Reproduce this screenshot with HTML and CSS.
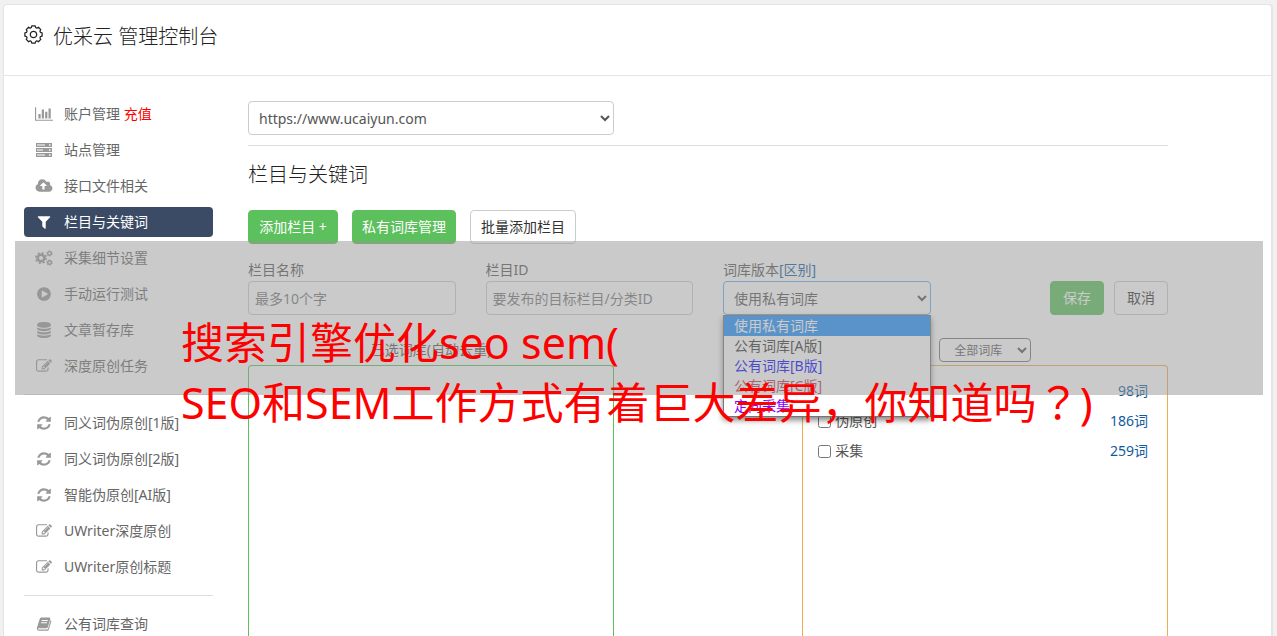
FILE: index.html
```
<!DOCTYPE html>
<html lang="zh-CN">
<head>
<meta charset="utf-8">
<title>优采云 管理控制台</title>
<link rel="stylesheet" href="styles.css">
</head>
<body>
<svg class="sprite" aria-hidden="true">
  <symbol id="i-chart" viewBox="0 0 2048 1792"><path d="M640 896v512h-256v-512h256zm384-512v1024h-256v-1024h256zm1024 1152v128h-2048v-1536h128v1408h1920zm-640-896v768h-256v-768h256zm384-384v1152h-256v-1152h256z"/></symbol>
  <symbol id="i-server" viewBox="0 0 16 14"><path fill-rule="evenodd" d="M0 0h16v4H0zM1 1.500v1h8v-1zM13 1.300v1.400h1.500V1.300zM0 5h16v4H0zM1 6.500v1h6v-1zM13 6.300v1.400h1.500V6.300zM0 10h16v4H0zM1 11.500v1h8v-1zM13 11.300v1.400h1.500v-1.400z"/></symbol>
  <symbol id="i-cloud" viewBox="0 0 2048 1792"><path fill-rule="evenodd" d="M1344 864q0-14-9-23l-352-352q-9-9-23-9t-23 9l-351 351q-10 12-10 24 0 14 9 23t23 9h224v352q0 13 9.500 22.500t22.500 9.500h192q13 0 22.500-9.500t9.500-22.500v-352h224q13 0 22.500-9.500t9.500-22.500zm640 288q0 159-112.500 271.500t-271.500 112.500h-1088q-185 0-316.500-131.500t-131.500-316.500q0-130 70-240t188-165q-2-30-2-43 0-212 150-362t362-150q156 0 285.500 87t188.500 231q71-62 166-62 106 0 181 75t75 181q0 76-41 138 130 31 213.500 135.500t83.500 238.500z"/></symbol>
  <symbol id="i-filter" viewBox="0 0 1792 1792"><path d="M1595 295q17 41-14 70l-493 493v742q0 42-39 59-13 5-25 5-27 0-45-19l-256-256q-19-19-19-45v-486l-493-493q-31-29-14-70 17-39 59-39h1280q42 0 59 39z"/></symbol>
  <symbol id="i-cogs" viewBox="0 0 18 16"><g fill="none" stroke="currentColor"><circle cx="6" cy="8" r="3.300" stroke-width="2.600"/><circle cx="6" cy="8" r="5.100" stroke-width="1.800" stroke-dasharray="2 2.005"/><circle cx="14.500" cy="3.400" r="1.800" stroke-width="1.400"/><circle cx="14.500" cy="3.400" r="2.700" stroke-width="1" stroke-dasharray="1.400 1.427"/><circle cx="14.500" cy="12.600" r="1.800" stroke-width="1.400"/><circle cx="14.500" cy="12.600" r="2.700" stroke-width="1" stroke-dasharray="1.400 1.427"/></g></symbol>
  <symbol id="i-play" viewBox="0 0 1792 1792"><path fill-rule="evenodd" d="M896 128q209 0 385.500 103t279.500 279.500 103 385.500-103 385.500-279.500 279.500-385.500 103-385.500-103-279.500-279.500-103-385.500 103-385.500 279.500-279.500 385.500-103zm384 823q32-18 32-55t-32-55l-544-320q-31-19-64-1-32 19-32 56v640q0 37 32 56 16 8 32 8 17 0 32-9z"/></symbol>
  <symbol id="i-database" viewBox="0 0 1792 1792"><path d="M896 768q237 0 443-43t325-127v170q0 69-103 128t-280 93.500-385 34.500-385-34.500-280-93.500-103-128v-170q119 84 325 127t443 43zm0 768q237 0 443-43t325-127v170q0 69-103 128t-280 93.500-385 34.500-385-34.500-280-93.500-103-128v-170q119 84 325 127t443 43zm0-384q237 0 443-43t325-127v170q0 69-103 128t-280 93.500-385 34.500-385-34.500-280-93.500-103-128v-170q119 84 325 127t443 43zm0-1152q208 0 385 34.500t280 93.500 103 128v128q0 69-103 128t-280 93.500-385 34.500-385-34.500-280-93.500-103-128v-128q0-69 103-128t280-93.500 385-34.500z"/></symbol>
  <symbol id="i-edit" viewBox="0 0 1792 1792"><path fill-rule="evenodd" d="M888 1184l116-116-152-152-116 116v56h96v96h56zm440-720q-16-16-33 1l-350 350q-17 17-1 33t33-1l350-350q17-17 1-33zm80 594v190q0 119-84.500 203.500t-203.500 84.500h-832q-119 0-203.500-84.500t-84.500-203.500v-832q0-119 84.500-203.500t203.500-84.500h832q63 0 117 25 15 7 18 23 3 17-9 29l-49 49q-14 14-32 8-23-6-45-6h-832q-66 0-113 47t-47 113v832q0 66 47 113t113 47h832q66 0 113-47t47-113v-126q0-13 9-22l64-64q15-15 35-7t20 29zm-96-738l288 288-672 672h-288v-288zm444 132l-92 92-288-288 92-92q28-28 68-28t68 28l152 152q28 28 28 68t-28 68z"/></symbol>
  <symbol id="i-refresh" viewBox="0 0 1792 1792"><path d="M1639 1056q0 5-1 7-64 268-268 434.500t-478 166.500q-146 0-282.500-55t-243.500-157l-129 129q-19 19-45 19t-45-19-19-45v-448q0-26 19-45t45-19h448q26 0 45 19t19 45-19 45l-137 137q71 66 161 102t187 36q134 0 250-65t186-179q11-17 53-117 8-23 30-23h192q13 0 22.500 9.500t9.500 22.500zm25-800v448q0 26-19 45t-45 19h-448q-26 0-45-19t-19-45 19-45l138-138q-148-137-349-137-134 0-250 65t-186 179q-11 17-53 117-8 23-30 23h-199q-13 0-22.500-9.500t-9.500-22.500v-7q65-268 270-434.500t480-166.500q146 0 284 55.500t245 156.500l130-129q19-19 45-19t45 19 19 45z"/></symbol>
  <symbol id="i-book" viewBox="0 0 16 16"><path fill-rule="evenodd" d="M5.200 1.500h8.200q1.200.2.900 1.500l-2.400 8q-.4 1.200-1.600 1.200H2.600q-.7 0-.6.700.2.600 1 .6h7.900q.8 0 1.100-.8L14.600 4q1 .5.700 1.500l-2.500 8q-.4 1.200-1.600 1.200H2.700Q.9 14.500.8 12.600q0-.6.300-1.300l2.500-8.100Q4 1.700 5.200 1.500zM5.900 4l-.3 1h6l.3-1zM5.200 6.300l-.3 1h6l.3-1z"/></symbol>
</svg>

<div class="card">
  <header class="card-head">
    <svg class="head-icon" viewBox="-9 -9 18 18" aria-hidden="true"><g fill="none" stroke="currentColor" stroke-width="1.200" stroke-linejoin="round"><path d="M8.150-1.580V1.580Q4.900 2.030 6.880 4.640L4.640 6.880Q2.030 4.900 1.580 8.150H-1.580Q-2.030 4.900-4.640 6.880L-6.880 4.640Q-4.900 2.030-8.150 1.580V-1.580Q-4.900-2.030-6.880-4.640L-4.640-6.880Q-2.030-4.900-1.580-8.150H1.580Q2.030-4.900 4.640-6.880L6.880-4.640Q4.900-2.030 8.150-1.580z"/><circle r="3"/></g></svg>
    <h1 class="head-title">优采云 管理控制台</h1>
  </header>

  <div class="layout">
    <nav class="side">
      <div class="side-group">
        <a class="side-item" href="#"><svg class="icon wide"><use href="#i-chart"/></svg><span>账户管理 <em class="hot">充值</em></span></a>
        <a class="side-item" href="#"><svg class="icon"><use href="#i-server"/></svg><span>站点管理</span></a>
        <a class="side-item" href="#"><svg class="icon wide"><use href="#i-cloud"/></svg><span>接口文件相关</span></a>
        <a class="side-item active" href="#"><svg class="icon"><use href="#i-filter"/></svg><span>栏目与关键词</span></a>
        <a class="side-item" href="#"><svg class="icon wide"><use href="#i-cogs"/></svg><span>采集细节设置</span></a>
        <a class="side-item" href="#"><svg class="icon"><use href="#i-play"/></svg><span>手动运行测试</span></a>
        <a class="side-item" href="#"><svg class="icon"><use href="#i-database"/></svg><span>文章暂存库</span></a>
        <a class="side-item" href="#"><svg class="icon"><use href="#i-edit"/></svg><span>深度原创任务</span></a>
      </div>
      <div class="side-group">
        <a class="side-item" href="#"><svg class="icon"><use href="#i-refresh"/></svg><span>同义词伪原创[1版]</span></a>
        <a class="side-item" href="#"><svg class="icon"><use href="#i-refresh"/></svg><span>同义词伪原创[2版]</span></a>
        <a class="side-item" href="#"><svg class="icon"><use href="#i-refresh"/></svg><span>智能伪原创[AI版]</span></a>
        <a class="side-item" href="#"><svg class="icon"><use href="#i-edit"/></svg><span>UWriter深度原创</span></a>
        <a class="side-item" href="#"><svg class="icon"><use href="#i-edit"/></svg><span>UWriter原创标题</span></a>
      </div>
      <div class="side-group">
        <a class="side-item" href="#"><svg class="icon"><use href="#i-book"/></svg><span>公有词库查询</span></a>
      </div>
    </nav>

    <main class="main">
      <div class="site-row">
        <select class="control site-select" aria-label="站点"><option>https://www.ucaiyun.com</option></select>
      </div>
      <h2 class="title">栏目与关键词</h2>
      <div class="actions">
        <button class="btn btn-green" type="button">添加栏目 +</button>
        <button class="btn btn-green" type="button">私有词库管理</button>
        <button class="btn btn-plain" type="button">批量添加栏目</button>
      </div>

      <form class="fields">
        <div class="field">
          <label for="name">栏目名称</label>
          <input class="control" id="name" type="text" placeholder="最多10个字">
        </div>
        <div class="field">
          <label for="cid">栏目ID</label>
          <input class="control" id="cid" type="text" placeholder="要发布的目标栏目/分类ID">
        </div>
        <div class="field">
          <div class="label-line"><label for="version">词库版本</label><a href="#">[区别]</a></div>
          <select class="control focused" id="version"><option>使用私有词库</option></select>
          <ul class="menu">
            <li class="selected">使用私有词库</li>
            <li>公有词库[A版]</li>
            <li class="blue">公有词库[B版]</li>
            <li class="red">公有词库[C版]</li>
            <li class="violet">定向采集</li>
          </ul>
        </div>
        <div class="form-buttons">
          <button class="btn btn-green btn-small" type="button">保存</button>
          <button class="btn btn-plain btn-small" type="button">取消</button>
        </div>
      </form>

      <div class="panels">
        <section class="panel-col">
          <div class="panel-head">已选词库(自动去重)</div>
          <div class="panel green"></div>
        </section>
        <section class="panel-col right">
          <div class="panel-head end">
            <select class="filter" aria-label="词库筛选"><option>全部词库</option></select>
          </div>
          <div class="panel orange">
            <div class="row"><input class="tick" type="checkbox" aria-label="词库"><a class="count" href="#">98词</a></div>
            <div class="row"><label class="pick"><input class="tick" type="checkbox">伪原创</label><a class="count" href="#">186词</a></div>
            <div class="row"><label class="pick"><input class="tick" type="checkbox">采集</label><a class="count" href="#">259词</a></div>
          </div>
        </section>
      </div>
    </main>
  </div>
</div>

<div class="banner"><p class="banner-text">搜索引擎优化seo sem(<br>SEO和SEM工作方式有着巨大差异，你知道吗<span class="mark" lang="zh-TW">？</span>)</p></div>
</body>
</html>
```
FILE: styles.css
```
* { box-sizing: border-box; }

body {
  margin: 0;
  height: 100vh;
  padding: 4px 5px 0 3px;
  overflow: hidden;
  position: relative;
  background: #f1f1f1;
  color: #555;
  font: 14px/20px "Noto Sans", "Noto Sans CJK SC", sans-serif;
}

a { color: #0f5b9e; text-decoration: none; }
button, input, select { font: inherit; color: inherit; }

.sprite { position: absolute; width: 0; height: 0; }

.card {
  height: 100%;
  display: flex;
  flex-direction: column;
  background: #fff;
  border: 1px solid #e5e5e5;
  border-bottom: 0;
  border-radius: 4px 4px 0 0;
  box-shadow: 1px 0 0 #e5e5e5;
}

.card-head {
  display: flex;
  align-items: flex-start;
  gap: 10px;
  height: 71px;
  padding: 16px 20px 0;
  border-bottom: 1px solid #e5e5e5;
  color: #222;
}
.head-icon { width: 19px; height: 19px; margin-top: 4px; }
.head-title { margin: 0; font-size: 20px; line-height: 32px; font-weight: 300; }

.layout {
  flex: 1;
  min-height: 0;
  display: flex;
  gap: 35px;
  width: 100%;
  max-width: 1184px;
  padding: 23px 20px 0;
}

.side { flex: 0 0 189px; }
.side-group { display: flex; flex-direction: column; gap: 6px; }
.side-group + .side-group { margin-top: 13px; padding-top: 13px; border-top: 1px solid #ddd; }
.side-item {
  display: grid;
  grid-template-columns: 20px 1fr;
  column-gap: 10px;
  align-items: center;
  height: 30px;
  padding-left: 10px;
  border-radius: 4px;
  color: #666;
}
.side-item.active { background: #3b4b66; color: #fff; }
.icon { width: 16px; height: 16px; color: #999; fill: currentColor; justify-self: center; }
.icon.wide { width: 18px; }
.active .icon { color: #fff; }
.hot { color: #f00; font-style: normal; }

.main { flex: 1; min-width: 0; display: flex; flex-direction: column; padding-top: 2px; }

.control {
  display: block;
  width: 100%;
  height: 34px;
  padding: 6px;
  border: 1px solid #ccc;
  border-radius: 4px;
  background: #fff;
  outline: 0;
}
.control::placeholder { color: #777; }
.focused { border-color: #66afe9; }

.site-row {
  display: grid;
  grid-template-columns: repeat(12, 1fr);
  column-gap: 30px;
  padding-bottom: 10px;
  border-bottom: 1px solid #ddd;
}
.site-select { grid-column: span 5; }

.title { margin: 14px 0 20px; font-size: 20px; line-height: 30px; font-weight: 300; color: #222; }

.actions { display: flex; gap: 14px; }
.btn {
  min-width: 90px;
  height: 34px;
  padding: 0 10px;
  border: 1px solid #ccc;
  border-radius: 4px;
  white-space: nowrap;
}
.btn-green { padding: 0 9px; background: #5cc05c; border-color: #5cc05c; color: #fff; }
.btn-plain { background: #fff; color: #333; }
.btn-small { min-width: 54px; padding: 0; }

.fields { display: grid; grid-template-columns: repeat(4, 1fr); gap: 30px; margin-top: 16px; }
.field { position: relative; }
.field > label, .label-line { display: block; margin-bottom: 1px; }
.form-buttons { display: flex; gap: 10px; align-items: flex-end; justify-content: flex-end; }

.menu {
  position: absolute;
  z-index: 2;
  top: 100%;
  left: 0;
  right: 0;
  margin: 0;
  padding: 0;
  list-style: none;
  background: #fff;
  border: 1px solid #767676;
  box-shadow: 0 3px 6px rgba(0, 0, 0, 0.5);
  color: #333;
}
.menu li { padding-left: 10px; }
.menu .selected { background: #1e90ff; color: #fff; }
.menu .blue { color: #00f; }
.menu .red { color: #c03050; }
.menu .violet { color: #80f; }

.panels {
  flex: 1;
  min-height: 0;
  display: grid;
  grid-template-columns: repeat(12, 1fr);
  column-gap: 30px;
  margin-top: 20px;
}
.panel-col { grid-column: span 5; display: flex; flex-direction: column; }
.panel-col.right { grid-column: 8 / span 5; }
.panel-head { height: 30px; padding-top: 5px; text-align: center; }
.panel-head.end { display: flex; padding: 3px 0 0 137px; }
.filter {
  width: 92px;
  height: 24px;
  padding: 0 10px;
  border: 1px solid #767676;
  border-radius: 4px;
  background: #fff;
  font-size: 12px;
}
.panel { flex: 1; border: 1px solid; border-bottom: 0; border-radius: 4px 4px 0 0; }
.panel.green { border-color: #5cc05c; }
.panel.orange { padding: 10px 19px 0 15px; border-color: #f0ad4e; }
.row { display: flex; align-items: center; justify-content: space-between; height: 30px; }
.pick { display: flex; align-items: center; gap: 4px; }
.tick { width: 13px; height: 13px; margin: 0; }

/* Translucent title strip lying over the page */
.banner {
  position: absolute;
  z-index: 5;
  top: 241px;
  left: 15px;
  right: 14px;
  height: 154px;
  padding: 72px 0 0 166px;
  background: rgba(150, 150, 150, 0.5);
  pointer-events: none;
}
.banner-text { margin: 0; color: #f00; font-size: 43px; line-height: 60px; white-space: nowrap; }
.mark { font-family: "Noto Sans CJK TC", sans-serif; line-height: 0; }
```
